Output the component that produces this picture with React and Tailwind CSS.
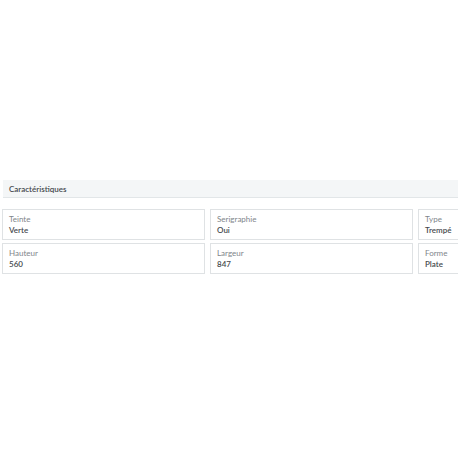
const ROWS = [
  [
    { label: "Teinte", value: "Verte" },
    { label: "Serigraphie", value: "Oui" },
    { label: "Type", value: "Trempé" },
  ],
  [
    { label: "Hauteur", value: "560" },
    { label: "Largeur", value: "847" },
    { label: "Forme", value: "Plate" },
  ],
];

const Field = ({ label, value }) => (
  <div className="h-[31px] border border-[#dfe2e4] bg-white px-[6px] pt-[4px] leading-[11px]">
    <p className="text-[8px] text-[#80858a]">{label}</p>
    <p className="text-[8px] font-semibold text-[#45494d]">{value}</p>
  </div>
);

export default function App() {
  return (
    <div
      className="h-[458px] w-[458px] overflow-hidden bg-white pt-[180px]"
      style={{ fontFamily: "Lato, 'Liberation Sans', sans-serif" }}
    >
      {/* Header */}
      <div className="ml-[3px] flex h-[18px] w-[600px] items-center border-b border-[#e2e6e8] bg-[#f4f6f7] px-[6px]">
        <span className="text-[8px] font-semibold text-[#45494d]">Caractéristiques</span>
      </div>

      {/* Fields */}
      <div className="ml-[2px] mt-[11px] grid w-[620px] grid-cols-[203px_203px_203px] gap-x-[5px] gap-y-[3px]">
        {ROWS.flat().map((f) => (
          <Field key={f.label} {...f} />
        ))}
      </div>
    </div>
  );
}
